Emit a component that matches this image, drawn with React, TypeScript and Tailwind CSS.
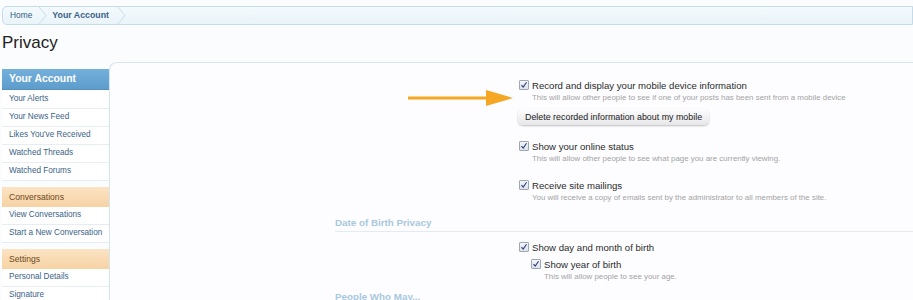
import React from "react";

const Check = ({ className = "" }: { className?: string }) => (
  <span
    className={`inline-flex w-[10px] h-[10px] shrink-0 items-center justify-center border border-[#9ea8b4] rounded-[1px] bg-gradient-to-b from-[#f4f6f9] to-[#dde3ea] ${className}`}
  >
    <svg viewBox="0 0 10 10" className="w-[8px] h-[8px]">
      <path d="M1.8 5.2 L4 7.6 L8.2 1.6" fill="none" stroke="#2f3c7e" strokeWidth="1.4" />
    </svg>
  </span>
);

const Option = ({
  label,
  hint,
  className = "",
}: {
  label: string;
  hint?: string;
  className?: string;
}) => (
  <div className={`flex items-start gap-[3px] ${className}`}>
    <Check className="mt-[1px]" />
    <div className="flex flex-col">
      <span className="text-[9.6px] leading-[13px] text-[#2b2b2b]">{label}</span>
      {hint && <span className="text-[7.9px] leading-[12px] text-[#a3a3a3]">{hint}</span>}
    </div>
  </div>
);

const SideItem = ({ label }: { label: string }) => (
  <div className="h-[18px] flex items-center pl-[7px] border-b border-[#e6eef3] bg-white text-[8.2px] text-[#3a6287]">
    {label}
  </div>
);

const SideHead = ({ label }: { label: string }) => (
  <div className="h-[20px] flex items-center pl-[7px] bg-gradient-to-b from-[#fbe3c3] to-[#f6d3a4] text-[8.6px] text-[#6e4720]">
    {label}
  </div>
);

export default function App() {
  return (
    <div className="relative w-[913px] h-[300px] overflow-hidden bg-[#fbfcfe] font-['Liberation_Sans',Arial,sans-serif]">
      <div className="pl-[2px] pt-[6px]">
        {/* breadcrumb */}
        <div className="flex h-[19px] items-stretch border border-[#c6dbe8] rounded-l-[5px] bg-gradient-to-b from-[#f4fafd] to-[#e9f4f9]">
          <span className="flex items-center pl-[7px] pr-[7px] text-[8.4px] text-[#2f5f86]">Home</span>
          <svg viewBox="0 0 8 19" className="w-[8px] h-full" preserveAspectRatio="none">
            <path d="M0 0 L7 9.5 L0 19" fill="none" stroke="#c6dbe8" strokeWidth="1" />
          </svg>
          <span className="flex items-center pl-[5px] pr-[9px] text-[8.8px] font-semibold text-[#3a6287]">
            Your Account
          </span>
          <svg viewBox="0 0 8 19" className="w-[8px] h-full" preserveAspectRatio="none">
            <path d="M0 0 L7 9.5 L0 19" fill="none" stroke="#c6dbe8" strokeWidth="1" />
          </svg>
        </div>

        <h1 className="mt-[8px] text-[17px] leading-[20px] text-[#222]">Privacy</h1>

        <div className="flex mt-[9px]">
          {/* sidebar */}
          <div className="w-[107px] shrink-0 mt-[7px]">
            <div className="h-[21px] flex items-center pl-[7px] bg-gradient-to-b from-[#73b0dc] to-[#5e9ccc] text-[10.4px] font-bold text-white border-b border-[#5890bd]">
              Your Account
            </div>
            <div className="h-[1px]" />
            <SideItem label="Your Alerts" />
            <SideItem label="Your News Feed" />
            <SideItem label="Likes You've Received" />
            <SideItem label="Watched Threads" />
            <SideItem label="Watched Forums" />
            <div className="h-[6px]" />
            <SideHead label="Conversations" />
            <SideItem label="View Conversations" />
            <SideItem label="Start a New Conversation" />
            <div className="h-[6px]" />
            <SideHead label="Settings" />
            <SideItem label="Personal Details" />
            <SideItem label="Signature" />
          </div>

          {/* main panel */}
          <div className="flex-1 min-h-[260px] border-l border-t border-[#d5e5ec] rounded-tl-[8px] bg-[#fdfdff] pt-[16px] pl-[225px]">
            <div className="pl-[184px] flex flex-col">
              <Option
                label="Record and display your mobile device information"
                hint="This will allow other people to see if one of your posts has been sent from a mobile device"
              />
              <button className="self-start -ml-[1px] mt-[5px] h-[16px] px-[7px] rounded-[5px] bg-gradient-to-b from-[#fdfdfd] to-[#e7e7ea] shadow-[0_1px_2px_rgba(0,0,0,0.25)] text-[8.9px] text-[#222] leading-[16px]">
                Delete recorded information about my mobile
              </button>
              <Option
                className="mt-[15px]"
                label="Show your online status"
                hint="This will allow other people to see what page you are currently viewing."
              />
              <Option
                className="mt-[14px]"
                label="Receive site mailings"
                hint="You will receive a copy of emails sent by the administrator to all members of the site."
              />
            </div>

            <h3 className="mt-[12px] pb-[1px] text-[9.8px] leading-[14px] font-bold text-[#a8c8de] border-b border-[#e3ebf0]">
              Date of Birth Privacy
            </h3>

            <div className="pl-[184px] flex flex-col">
              <Option className="mt-[9px]" label="Show day and month of birth" />
              <Option
                className="mt-[4px] ml-[12px]"
                label="Show year of birth"
                hint="This will allow people to see your age."
              />
            </div>

            <h3 className="mt-[7px] text-[9.8px] leading-[14px] font-bold text-[#a8c8de]">People Who May...</h3>
          </div>
        </div>
      </div>

      {/* annotation arrow */}
      <svg className="absolute left-[405px] top-[88px] w-[110px] h-[20px]" viewBox="0 0 110 20">
        <line x1="3" y1="10" x2="84" y2="10" stroke="#f5a623" strokeWidth="3" />
        <polygon points="81,2 108,10 81,18" fill="#f5a623" />
      </svg>
    </div>
  );
}
